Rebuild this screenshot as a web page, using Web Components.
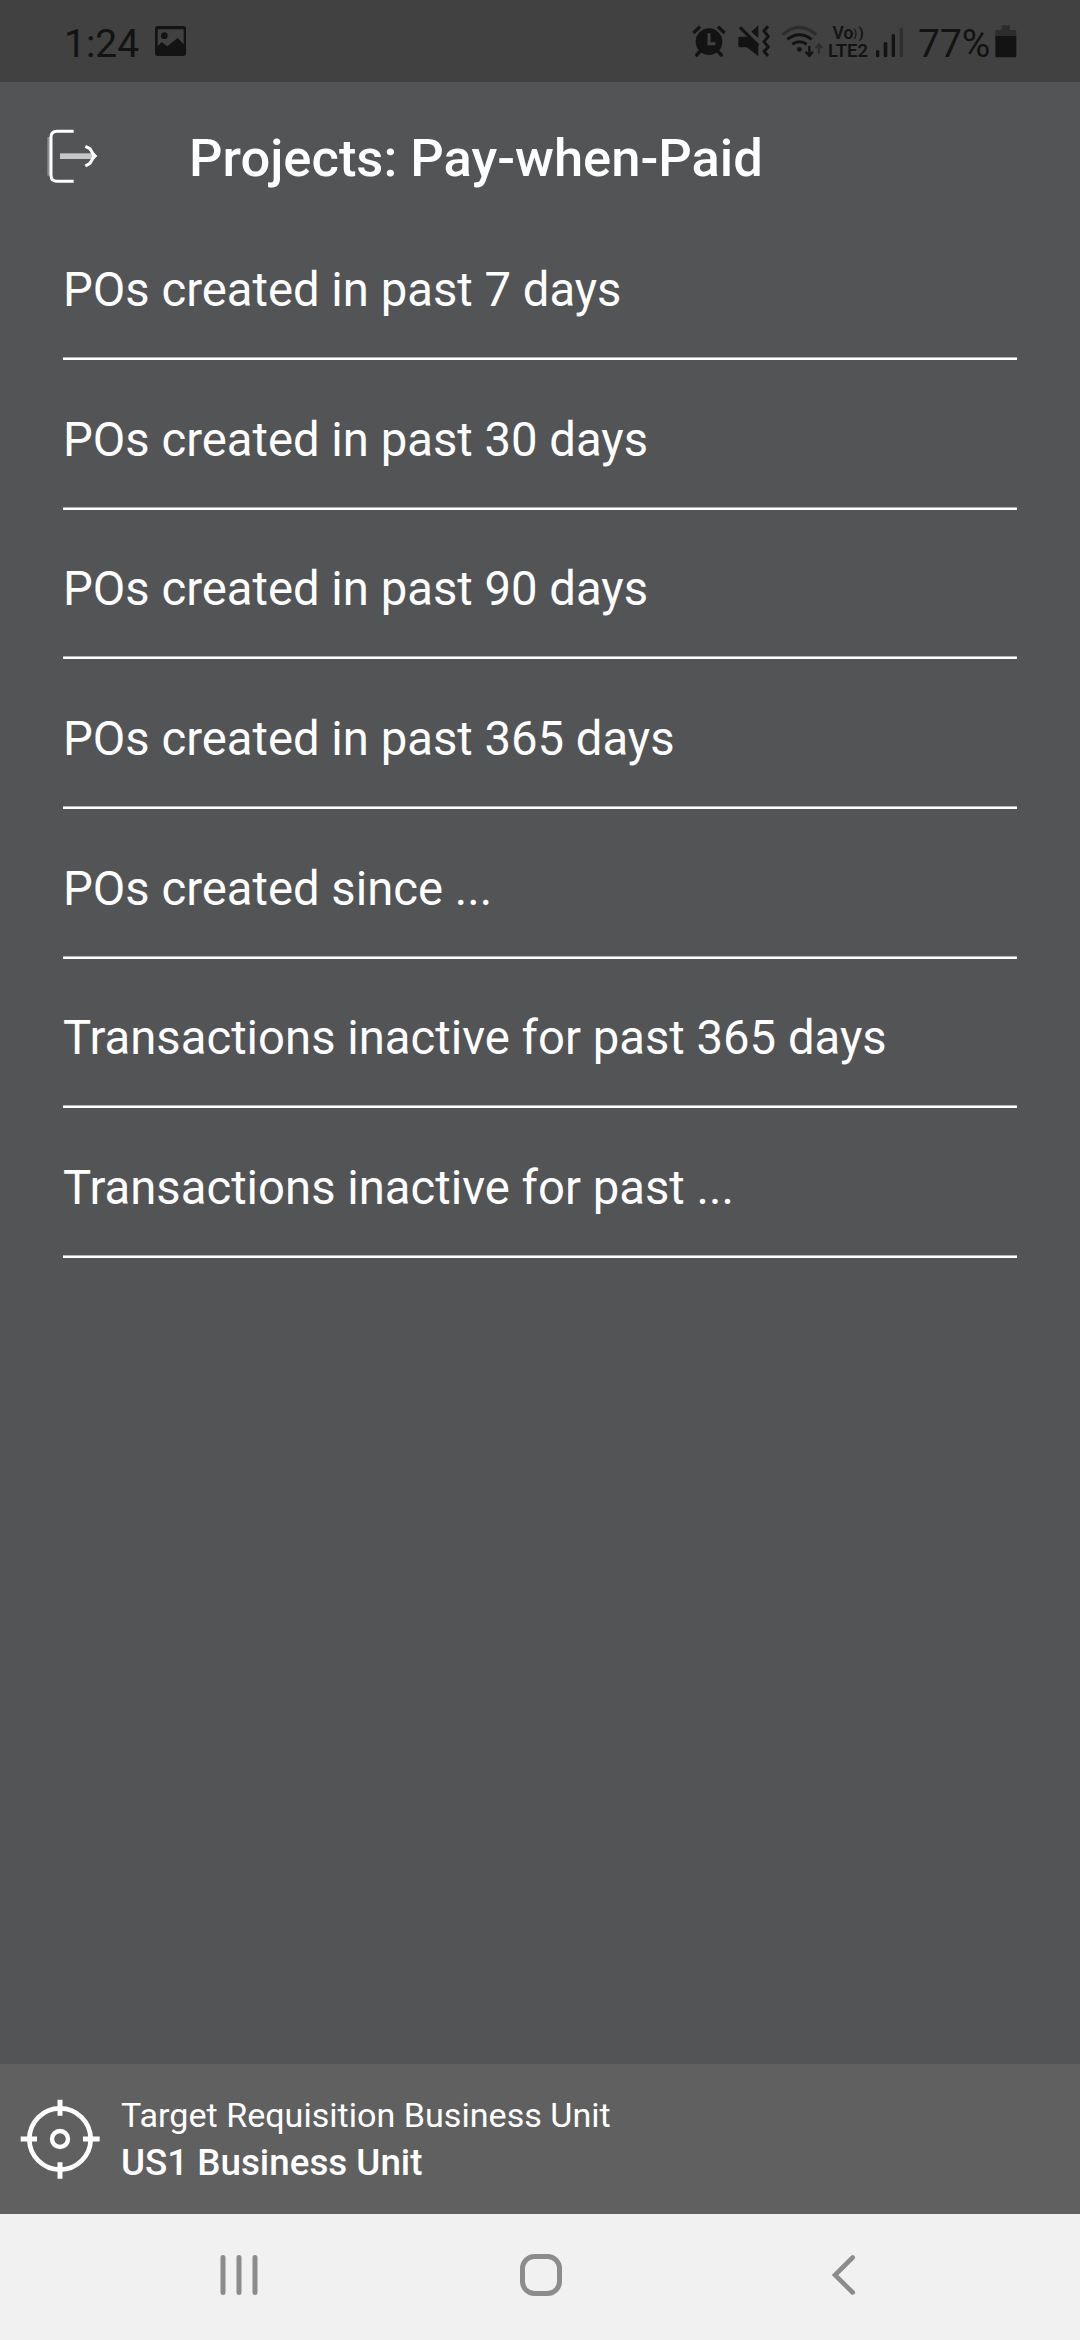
<!DOCTYPE html>
<html lang="en">
<head>
<meta charset="utf-8">
<title>Projects: Pay-when-Paid</title>
<style>
	body {
		margin: 0;
		background: #535456;
		font-family: Roboto, "Liberation Sans", sans-serif;
	}
</style>
</head>
<body>
<app-screen>
	<status-bar slot="status" time="1:24" battery="77%"></status-bar>
	<title-bar slot="title">Projects: Pay-when-Paid</title-bar>
	<query-row>POs created in past 7 days</query-row>
	<query-row>POs created in past 30 days</query-row>
	<query-row>POs created in past 90 days</query-row>
	<query-row>POs created in past 365 days</query-row>
	<query-row>POs created since ...</query-row>
	<query-row>Transactions inactive for past 365 days</query-row>
	<query-row>Transactions inactive for past ...</query-row>
	<unit-footer slot="footer">
		<span slot="label">Target Requisition Business Unit</span>
		<span slot="value">US1 Business Unit</span>
	</unit-footer>
	<nav-bar slot="nav"></nav-bar>
</app-screen>

<script>
// [width, height, viewBox, markup]
const ICONS = {
	picture: [31, 30, "465 78 93 90", `
		<path fill="currentColor" fill-rule="evenodd" d="M473 78h77q8 0 8 8v74q0 8-8 8h-77q-8 0-8-8v-74q0-8 8-8zM473 88v51l12-13 17 13 31-25 18 19V88z"/>
		<circle cx="493" cy="107" r="10" fill="currentColor"/>`],
	alarm: [34, 34, "36 42 102 102", `
		<circle cx="87" cy="95" r="40" fill="currentColor"/>
		<path d="M40 69 60 50M114 50l20 19" stroke="currentColor" stroke-width="10"/>
		<path d="m64 120-14 15M110 120l14 15" stroke="currentColor" stroke-width="10" stroke-linecap="round"/>
		<path d="M87 70v31h19" fill="none" stroke="#404140" stroke-width="9"/>`],
	mute: [34, 34, "171 42 102 102", `
		<path fill="currentColor" d="M175 84q0-4 4-4h27l29 27v32l-35-27h-21q-4 0-4-4z"/>
		<path fill="currentColor" d="M214 65 235 46v38z"/>
		<path d="M180 52 235 107" stroke="currentColor" stroke-width="9"/>
		<path d="m264 49-12 14 13 16-13 16 13 16-13 13 12 14" fill="none" stroke="currentColor" stroke-width="9" stroke-linejoin="round"/>`],
	wifi: [43, 34, "303 42 129 102", `
		<path d="M308 74Q358 30 409 74" fill="none" stroke="#2b2c2b" stroke-width="9"/>
		<path d="M322 88Q358 60 395 88" fill="none" stroke="currentColor" stroke-width="9"/>
		<path d="M337 103Q358 88 380 103" fill="none" stroke="currentColor" stroke-width="9"/>
		<circle cx="358" cy="118" r="7" fill="currentColor"/>
		<path d="M388 108v28M377 125l11 12 11-12" fill="none" stroke="currentColor" stroke-width="7"/>
		<path d="M417 131v-27M407 114l10-11 10 11" fill="none" stroke="#2b2c2b" stroke-width="6"/>`],
	volte: [43, 48, "0 -6 43 48", `
		<g fill="currentColor" font-family="Roboto, sans-serif" font-weight="600">
			<text x="5.5" y="15" font-size="17.5">Vo<tspan x="26.6" y="13.4" font-size="10">)</tspan><tspan x="31.4" y="14" font-size="15">)</tspan></text>
			<text x="1" y="32.7" font-size="17.5" textLength="40" lengthAdjust="spacingAndGlyphs">LTE2</text>
		</g>`],
	signal: [30, 34, "45 42 90 102", `
		<g fill="currentColor">
			<rect x="48" y="121" width="10" height="20" rx="3"/>
			<rect x="71" y="97" width="11" height="44" rx="3"/>
			<rect x="95" y="73" width="10" height="68" rx="3"/>
			<rect x="119" y="53" width="10" height="88" rx="3" fill="#2e2f2e"/>
		</g>`],
	battery: [22, 34, "404 42 66 102", `
		<path fill="#2b2c2b" d="M424 46h25v14h15q4 0 4 4v16h-63V64q0-4 4-4h15z"/>
		<path fill="currentColor" d="M405 78h63v60q0 4-4 4h-55q-4 0-4-4z"/>`],
	exit: [54, 57, "138 385 162 171", `
		<path fill="#8d8e8f" d="M142 412h8v116h-8z"/>
		<path d="M221 395h-50q-18 0-18 18v114q0 18 18 18h50" fill="none" stroke="#fff" stroke-width="9"/>
		<path fill="#c6c6c7" d="M180 461h96v17h-96z"/>
		<path d="m256 440 14 7 8 14 7 8-7 8-8 14-14 8" fill="none" stroke="#fff" stroke-width="9"/>
		<path fill="#fff" d="m276 458 16 11-16 11z"/>`],
	target: [80, 80, "61 148 240 240", `
		<g fill="none" stroke="#fff">
			<circle cx="181" cy="268" r="92" stroke-width="14"/>
			<circle cx="181" cy="268" r="24" stroke-width="13"/>
			<path d="M181 150v48M181 338v49M63 268h49M250 268h50" stroke-width="15"/>
		</g>`],
	recents: [60, 60, "0 0 60 60", `
		<path d="M14 13.5v35M30 13.5v35M46 13.5v35" stroke="currentColor" stroke-width="5" stroke-linecap="round"/>`],
	home: [60, 60, "0 0 60 60", `
		<rect x="11.5" y="12.5" width="37" height="37" rx="12" fill="none" stroke="currentColor" stroke-width="5"/>`],
	back: [60, 60, "0 0 60 60", `
		<path d="M39.7 13.5 22 31l17.7 17.5" fill="none" stroke="currentColor" stroke-width="4.6" stroke-linecap="round"/>`],
};

class UiIcon extends HTMLElement {
	constructor() {
		super();
		this.attachShadow({ mode: "open" });
	}

	connectedCallback() {
		const [width, height, box, markup] = ICONS[this.getAttribute("name")];
		this.shadowRoot.innerHTML = `
			<style>
				:host { display: block; flex: none; }
				svg { display: block; }
			</style>
			<svg width="${width}" height="${height}" viewBox="${box}" aria-hidden="true">${markup}</svg>
		`;
	}
}

class AppScreen extends HTMLElement {
	constructor() {
		super();
		this.attachShadow({ mode: "open" });
		this.shadowRoot.innerHTML = `
			<style>
				:host {
					display: flex;
					flex-direction: column;
					width: 1080px;
					height: 2340px;
					overflow: hidden;
					background: #535456;
					color: #fff;
				}

				main {
					flex: 1;
					padding: 0 63px;
				}
			</style>
			<slot name="status"></slot>
			<slot name="title"></slot>
			<main><slot></slot></main>
			<slot name="footer"></slot>
			<slot name="nav"></slot>
		`;
	}
}

class StatusBar extends HTMLElement {
	constructor() {
		super();
		this.attachShadow({ mode: "open" });
	}

	connectedCallback() {
		this.shadowRoot.innerHTML = `
			<style>
				:host {
					display: flex;
					justify-content: space-between;
					box-sizing: border-box;
					height: 82px;
					padding: 24px 63px 0 64px;
					background: #404140;
					color: #121312;
					font-size: 39px;
					line-height: 40px;
				}

				div { display: flex; align-items: flex-start; }
				.time { width: 91px; }
				.level { width: 72px; margin-left: 13px; }
				.picture { margin-top: 2px; }
				.mute { margin-left: 11px; }
				.wifi { margin-left: 10px; }
				.volte { margin: -6px 0 0 3px; }
				.signal { margin-left: 5px; }
				.battery { margin-left: 5px; }
			</style>
			<div>
				<span class="time">${this.getAttribute("time")}</span>
				<ui-icon class="picture" name="picture"></ui-icon>
			</div>
			<div>
				<ui-icon name="alarm"></ui-icon>
				<ui-icon class="mute" name="mute"></ui-icon>
				<ui-icon class="wifi" name="wifi"></ui-icon>
				<ui-icon class="volte" name="volte"></ui-icon>
				<ui-icon class="signal" name="signal"></ui-icon>
				<span class="level">${this.getAttribute("battery")}</span>
				<ui-icon class="battery" name="battery"></ui-icon>
			</div>
		`;
	}
}

class TitleBar extends HTMLElement {
	constructor() {
		super();
		this.attachShadow({ mode: "open" });
		this.shadowRoot.innerHTML = `
			<style>
				:host {
					display: flex;
					align-items: flex-start;
					box-sizing: border-box;
					height: 128.4px;
					padding: 45px 46px 0;
					gap: 89px;
				}

				ui-icon { margin-top: 1.3px; }

				h1 {
					margin: 0;
					font-size: 52.5px;
					font-weight: 500;
					line-height: 62px;
					white-space: nowrap;
				}
			</style>
			<ui-icon name="exit"></ui-icon>
			<h1><slot></slot></h1>
		`;
	}
}

class QueryRow extends HTMLElement {
	constructor() {
		super();
		this.attachShadow({ mode: "open" });
		this.shadowRoot.innerHTML = `
			<style>
				:host {
					display: flex;
					flex-direction: column;
					justify-content: space-between;
					height: 149.625px;
					font-size: 47.25px;
					line-height: 56px;
					white-space: nowrap;
				}

				span { padding-top: 51.8px; }

				hr {
					width: 100%;
					height: 2px;
					margin: 0;
					border: 0;
					border-top: 1px solid #b4b4b5;
					background: #fff;
				}
			</style>
			<span><slot></slot></span>
			<hr>
		`;
	}
}

class UnitFooter extends HTMLElement {
	constructor() {
		super();
		this.attachShadow({ mode: "open" });
		this.shadowRoot.innerHTML = `
			<style>
				:host {
					display: flex;
					align-items: center;
					box-sizing: border-box;
					height: 150px;
					padding-left: 20px;
					gap: 21px;
					background: #606060;
				}

				.text { display: flex; flex-direction: column; gap: 5px; }
				.label { font-size: 34.125px; line-height: 42px; }
				.value { font-size: 36.75px; line-height: 43px; font-weight: 500; }
			</style>
			<ui-icon name="target"></ui-icon>
			<div class="text">
				<div class="label"><slot name="label"></slot></div>
				<div class="value"><slot name="value"></slot></div>
			</div>
		`;
	}
}

class NavBar extends HTMLElement {
	constructor() {
		super();
		this.attachShadow({ mode: "open" });
		this.shadowRoot.innerHTML = `
			<style>
				:host {
					display: flex;
					justify-content: space-between;
					box-sizing: border-box;
					height: 126px;
					padding: 30px 207px 0 209px;
					background: #f1f1f1;
					color: #8c8c8c;
				}
			</style>
			<ui-icon name="recents"></ui-icon>
			<ui-icon name="home"></ui-icon>
			<ui-icon name="back"></ui-icon>
		`;
	}
}

customElements.define("ui-icon", UiIcon);
customElements.define("app-screen", AppScreen);
customElements.define("status-bar", StatusBar);
customElements.define("title-bar", TitleBar);
customElements.define("query-row", QueryRow);
customElements.define("unit-footer", UnitFooter);
customElements.define("nav-bar", NavBar);
</script>
</body>
</html>
